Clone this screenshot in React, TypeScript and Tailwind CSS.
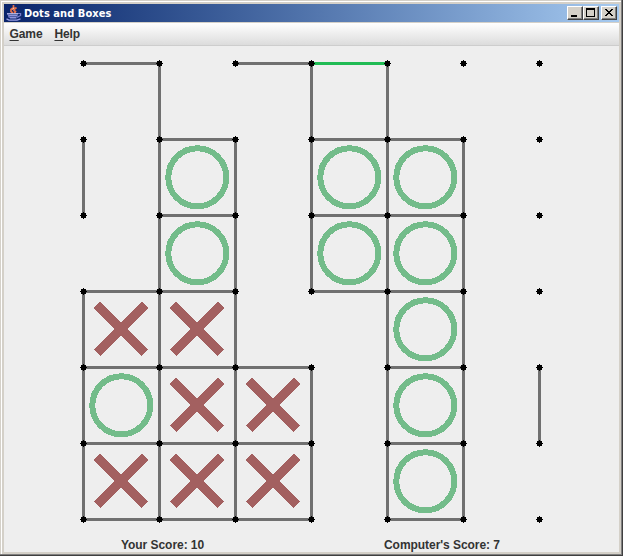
import type { ReactNode } from "react";

const CELL = 76;
const DOTS = [0, 1, 2, 3, 4, 5, 6];

// Column index where each horizontal edge starts, listed by row.
const HORIZONTAL = [[0, 2], [1, 3, 4], [1, 3, 4], [0, 1, 3, 4], [0, 1, 2, 4], [0, 1, 2, 4], [0, 1, 2, 4]];
// Row index where each vertical edge starts, listed by column.
const VERTICAL = [[1, 3, 4, 5], [0, 1, 2, 3, 4, 5], [1, 2, 3, 4, 5], [0, 1, 2, 4, 5], [0, 1, 2, 3, 4, 5], [1, 2, 3, 4, 5], [4]];
const COMPUTER = [[1, 1], [3, 1], [4, 1], [1, 2], [3, 2], [4, 2], [4, 3], [0, 4], [4, 4], [4, 5]];
const PLAYER = [[0, 3], [1, 3], [1, 4], [2, 4], [0, 5], [1, 5], [2, 5]];

function Board() {
  return (
    <svg width="464" height="464" viewBox="-4 -4 464 464" shapeRendering="crispEdges" className="ml-[75px] mt-[13px] block">
      {HORIZONTAL.map((cols, r) =>
        cols.map((c) => <rect key={`h${r}-${c}`} x={c * CELL} y={r * CELL - 1} width={CELL} height="3" fill="#707070" />),
      )}
      {VERTICAL.map((rows, c) =>
        rows.map((r) => <rect key={`v${c}-${r}`} x={c * CELL - 1} y={r * CELL} width="3" height={CELL} fill="#707070" />),
      )}
      <rect x={3 * CELL} y="-1" width={CELL} height="3" fill="#20bb54" />
      {COMPUTER.map(([c, r]) => (
        <circle key={`o${c}-${r}`} cx={c * CELL + 38.3} cy={r * CELL + 38.3} r="29" fill="none" stroke="#73bc8a" strokeWidth="6" />
      ))}
      {PLAYER.map(([c, r]) => (
        <path
          key={`x${c}-${r}`}
          d={`M${c * CELL + 14} ${r * CELL + 14}l48 48m0-48l-48 48`}
          fill="none"
          stroke="#a36060"
          strokeWidth="8.6"
        />
      ))}
      {DOTS.map((r) =>
        DOTS.map((c) => (
          <path
            key={`d${c}-${r}`}
            transform={`translate(${c * CELL - 3} ${r * CELL - 3})`}
            d="M3 0h1v1h2v2h1v1h-1v2h-2v1h-1v-1h-2v-2h-1v-1h1v-2h2z"
            fill="#000"
          />
        )),
      )}
    </svg>
  );
}

function JavaCup() {
  return (
    <svg width="16" height="16" viewBox="0 0 16 16" fill="none" className="shrink-0">
      <path d="M7.5 0v2.5l-2.5 2v2l2 1.8M10.5 2.5l-2.5 2v1l1.5 1-1 2" stroke="#e87048" strokeWidth="1.7" />
      <path d="M6.5 4.5l1.5-2" stroke="#ffd8b8" />
      <path d="M1 8.8h11" stroke="#c3c5f5" strokeWidth="1.3" />
      <path d="M2.5 10.8h9M4 12.8h6.5" stroke="#8f94dc" strokeWidth="1.6" />
      <path d="M2 9l1.5 4M12 8.5h2.6v2L11 12.4" stroke="#7379c9" strokeWidth="1.2" />
      <path d="M0.5 13.8l2.5 1.3h8l3.5-1.3" stroke="#9a9ee6" strokeWidth="1.3" />
    </svg>
  );
}

function CaptionButton({ label, children }: { label: string; children: ReactNode }) {
  return (
    <button
      aria-label={label}
      className="h-[14px] w-4 shrink-0 border border-t-white border-l-white border-r-[#404040] border-b-[#404040] bg-[#d4d0c8] shadow-[inset_-1px_-1px_0_#808080]"
    >
      <svg width="14" height="12" viewBox="0 0 14 12" shapeRendering="crispEdges" className="block">
        {children}
      </svg>
    </button>
  );
}

export default function App() {
  return (
    <div className="h-[556px] w-[623px] overflow-hidden border-r border-b border-[#404040] bg-[#d4d0c8]">
      <div className="h-full border-r border-b border-[#808080] pt-px pl-px">
        <div className="flex h-full flex-col border-t border-l border-white p-[2px]">
          <div className="flex h-[18px] shrink-0 items-center bg-linear-to-r from-[#0a246a] to-[#a6caf0] pr-[2px] pl-[2px]">
            <JavaCup />
            <span className="ml-[2px] grow pt-px font-['DejaVu_Sans_Condensed','DejaVu_Sans',sans-serif] text-[11px] leading-[17px] font-bold tracking-[0.05px] whitespace-nowrap text-white">
              Dots and Boxes
            </span>
            <CaptionButton label="Minimize">
              <path d="M3 8h6v2H3z" />
            </CaptionButton>
            <CaptionButton label="Maximize">
              <path fillRule="evenodd" d="M2 1h9v9H2zM3 3v6h7V3z" />
            </CaptionButton>
            <div className="w-[2px] shrink-0" />
            <CaptionButton label="Close">
              <path d="M3 2h2v1h1v1h2V3h1V2h2v1h-1v1H9v1H8v1h1v1h1v1h1v1H9V8H8V7H6v1H5v1H3V8h1V7h1V6h1V5H5V4H4V3H3z" />
            </CaptionButton>
          </div>
          <div className="mt-px flex h-[23px] shrink-0 gap-3 border-b border-[#cdcdcd] bg-linear-to-b from-white to-[#dcdcdc] pl-[5.5px] font-['Liberation_Sans',sans-serif] text-[12px] leading-[22px] font-bold tracking-[-0.1px] text-[#333]">
            <span><u className="underline-offset-2">G</u>ame</span>
            <span><u className="underline-offset-2">H</u>elp</span>
          </div>
          <div className="min-h-0 grow bg-[#eee] font-['Liberation_Sans',sans-serif] text-[12px] font-bold text-[#333]">
            <Board />
            <div className="mt-[15px] flex leading-[14px] tracking-[-0.05px] whitespace-nowrap">
              <span className="ml-[117px] w-[263px]">Your Score: 10</span>
              <span>Computer&apos;s Score: 7</span>
            </div>
          </div>
        </div>
      </div>
    </div>
  );
}
